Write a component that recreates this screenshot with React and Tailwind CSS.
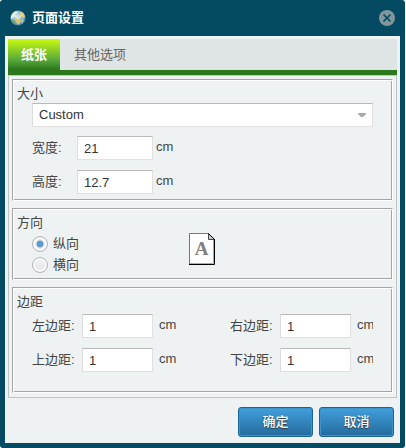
import React, { useState } from "react";

const boxStyle =
  "h-6 border border-t-[#b9b9b9] border-l-[#dcdcdc] border-r-[#e0e0e0] border-b-[#e0e0e0] bg-white text-[13px] text-[#333] outline-none";

function GlobeIcon() {
  return (
    <svg width="16" height="16" viewBox="0 0 16 16" aria-hidden="true">
      <defs>
        <radialGradient id="sea" cx="0.45" cy="0.4" r="0.6">
          <stop offset="0" stopColor="#d9ecf5" />
          <stop offset="0.6" stopColor="#83b4d4" />
          <stop offset="1" stopColor="#48799f" />
        </radialGradient>
      </defs>
      <circle cx="8" cy="8" r="7.6" fill="url(#sea)" />
      <path d="M1 6 L3 3 L6 1 L8 2 L6 4 L5 6 L3 8 L1 9Z" fill="#e9edd9" />
      <path d="M9 3 L12 2 L14 4 L15 7 L13 8 L11 6 L9 6Z" fill="#e7cf72" />
      <path d="M6 8 L9 8 L11 10 L10 13 L8 15 L6 12Z" fill="#d8c66d" />
      <path d="M2 10 L4 10 L5 12 L5 14 L3 13Z" fill="#6fa35f" />
      <path d="M12 10 L14 9 L13 12 L11 14Z" fill="#b9d4a5" />
      <path d="M4 5 L8 9 L12 5" stroke="#f4f7f3" fill="none" opacity="0.8" />
    </svg>
  );
}

function CloseIcon() {
  return (
    <svg width="16" height="16" viewBox="0 0 16 16" aria-hidden="true">
      <circle cx="8" cy="8" r="8" fill="#82979c" />
      <path
        d="M4.5 4.5 L11.5 11.5 M11.5 4.5 L4.5 11.5"
        stroke="#034a62"
        strokeWidth="1.7"
      />
    </svg>
  );
}

function PageIcon() {
  return (
    <svg width="26" height="32" viewBox="0 0 26 32" aria-hidden="true">
      <path d="M0.5 0.5 H19 L25.5 7 V31.5 H0.5Z" fill="#fff" />
      <path d="M0.5 31 V0.5 H19.5" fill="none" stroke="#777" />
      <path d="M19.5 0.5 V6.5 H25.5Z" fill="#ccc" stroke="#444" />
      <path d="M19.5 0.5 L25.5 6.5" fill="none" stroke="#000" />
      <path d="M0 31.5 H25.5 V6" fill="none" stroke="#000" />
      <path d="M1 30.5 H24.5 V7" fill="none" stroke="#aaa" />
      <text
        x="12.5"
        y="22"
        textAnchor="middle"
        fontSize="19"
        fontWeight="bold"
        fill="#808080"
        className="font-['Liberation_Serif',serif]"
      >
        A
      </text>
    </svg>
  );
}

function Group({ title, className, children }) {
  return (
    <fieldset
      className={`border border-t-[#a5a5a5] border-l-[#a5a5a5] border-r-white border-b-white shadow-[inset_1px_1px_#fff,inset_-1px_-1px_#a5a5a5] ${className}`}
    >
      <legend className="float-left w-full pl-1 pt-1 leading-[19px]">{title}</legend>
      <div className="clear-both px-[19px]">{children}</div>
    </fieldset>
  );
}

function SizeField({ id, label, value }) {
  return (
    <div className="flex h-6">
      <label htmlFor={id} className="w-[45px] leading-6">
        {label}
      </label>
      <input id={id} defaultValue={value} className={`w-[76px] px-1.5 ${boxStyle}`} />
      <span className="ml-[3px] leading-[22px]">cm</span>
    </div>
  );
}

function MarginField({ id, label }) {
  return (
    <div className="flex h-6">
      <label htmlFor={id} className="w-[50px] shrink-0 leading-6">
        {label}
      </label>
      <input id={id} defaultValue="1" className={`w-[71px] shrink-0 px-1.5 ${boxStyle}`} />
      <span className="ml-1.5 leading-[22px]">cm</span>
    </div>
  );
}

function OrientationOption({ value, label, checked, onChange }) {
  return (
    <label className="flex h-[21px] items-center gap-[5px]">
      <input
        type="radio"
        name="orientation"
        value={value}
        checked={checked}
        onChange={onChange}
        className="size-4 appearance-none rounded-full border border-[#b4b4b4] bg-[linear-gradient(#f4f4f4,#e2e2e2)] shadow-[inset_0_0_0_2px_#fafafa] checked:bg-[radial-gradient(circle,#5c9cca_0_3px,#eee_4px)]"
      />
      <span>{label}</span>
    </label>
  );
}

function DialogButton({ children }) {
  return (
    <button
      type="button"
      className="h-[30px] w-[75px] rounded-[3px] border border-[#1a6499] bg-linear-to-b from-[#429fdc] to-[#236b9d] text-[13px] font-medium text-white shadow-[inset_0_0_0_1px_#3c94cf] [text-shadow:0_1px_1px_#333]"
    >
      {children}
    </button>
  );
}

function App() {
  const [orientation, setOrientation] = useState("portrait");

  return (
    <div className="bg-white pr-px font-['Liberation_Sans','Noto_Sans_CJK_SC',sans-serif] text-[13px] text-[#444]">
      <div className="rounded-[3px] bg-[#034a62] px-[5px] pb-[5px]">
        <header className="flex h-9 items-center gap-1.5 px-[5px]">
          <GlobeIcon />
          <h1 className="flex-1 font-bold text-white">页面设置</h1>
          <button type="button" aria-label="关闭">
            <CloseIcon />
          </button>
        </header>

        <main className="bg-[#eef2f3] px-[3px] pt-[3px] pb-1.5">
          <div role="tablist" className="flex h-9 border-b-[5px] border-[#2c781d] bg-[#dfe4e4]">
            <button
              type="button"
              role="tab"
              aria-selected="true"
              className="-mb-[5px] h-9 w-[52px] bg-[linear-gradient(#c8fb10,#55a63a_60%,#2c781d_85%)] pb-[5px] font-bold text-white"
            >
              纸张
            </button>
            <button
              type="button"
              role="tab"
              aria-selected="false"
              className="px-3.5 text-[#666]"
            >
              其他选项
            </button>
          </div>

          <div className="flex flex-col gap-[7px] border border-[#bfc4c4] px-[3px] pt-[3px] pb-1">
            <Group title="大小" className="h-[122px]">
              <div className="relative">
                <select
                  aria-label="大小"
                  className={`block w-full appearance-none px-1.5 ${boxStyle}`}
                >
                  <option>Custom</option>
                </select>
                <svg
                  width="8"
                  height="4"
                  viewBox="0 0 8 4"
                  className="pointer-events-none absolute right-[7px] top-2.5"
                  aria-hidden="true"
                >
                  <path d="M0 0 H8 V1 L5 4 H3 L0 1Z" fill="#aaa" />
                </svg>
              </div>
              <div className="mt-[9px] flex flex-col gap-2.5">
                <SizeField id="width" label="宽度:" value="21" />
                <SizeField id="height" label="高度:" value="12.7" />
              </div>
            </Group>

            <Group title="方向" className="h-[72px]">
              <div className="flex pt-px">
                <div className="w-[157px]">
                  <OrientationOption
                    value="portrait"
                    label="纵向"
                    checked={orientation === "portrait"}
                    onChange={() => setOrientation("portrait")}
                  />
                  <OrientationOption
                    value="landscape"
                    label="横向"
                    checked={orientation === "landscape"}
                    onChange={() => setOrientation("landscape")}
                  />
                </div>
                <PageIcon />
              </div>
            </Group>

            <Group title="边距" className="h-[106px]">
              <div className="flex justify-between pt-[3px]">
                <div className="flex flex-col gap-2.5">
                  <MarginField id="left" label="左边距:" />
                  <MarginField id="top" label="上边距:" />
                </div>
                <div className="flex w-[143px] flex-col gap-2.5 overflow-hidden">
                  <MarginField id="right" label="右边距:" />
                  <MarginField id="bottom" label="下边距:" />
                </div>
              </div>
            </Group>
          </div>

          <div className="mt-[9px] flex justify-end gap-1.5 pr-[3px]">
            <DialogButton>确定</DialogButton>
            <DialogButton>取消</DialogButton>
          </div>
        </main>
      </div>
    </div>
  );
}

export default App;
